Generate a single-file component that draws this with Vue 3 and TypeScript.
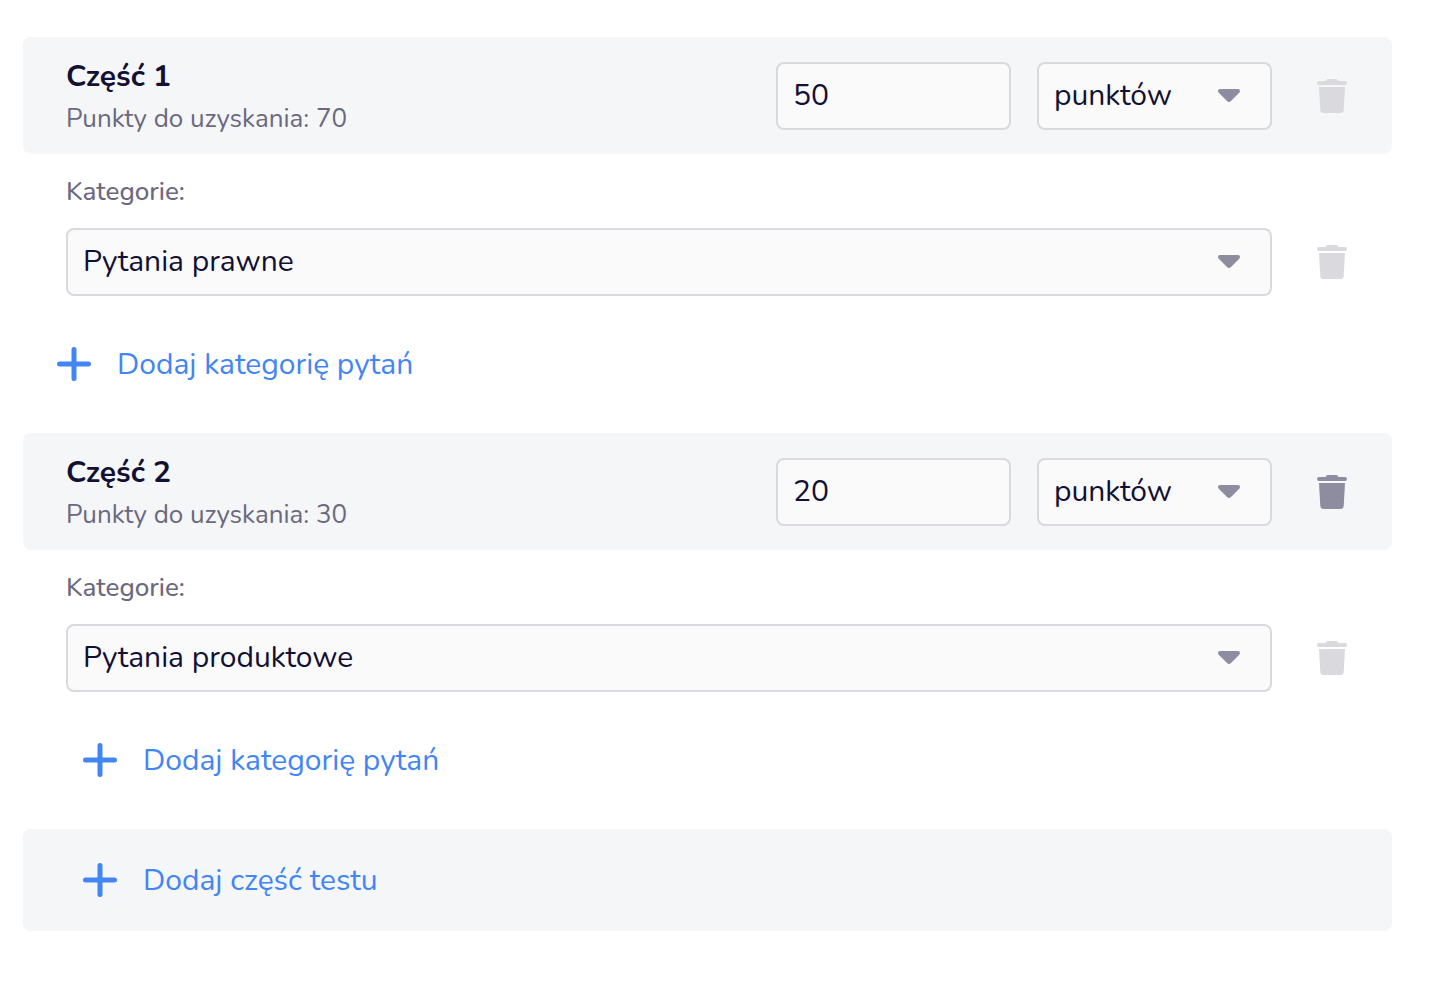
<script setup lang="ts">
import { ref } from 'vue'

interface Part {
  id: number
  title: string
  available: number
  threshold: string
  unit: string
  category: string
  removable: boolean
  indented: boolean
}

const units: string[] = ['punktów', 'procent']
const categories: string[] = ['Pytania prawne', 'Pytania produktowe']

const parts = ref<Part[]>([
  { id: 1, title: 'Część 1', available: 70, threshold: '50', unit: 'punktów', category: 'Pytania prawne', removable: false, indented: false },
  { id: 2, title: 'Część 2', available: 30, threshold: '20', unit: 'punktów', category: 'Pytania produktowe', removable: true, indented: true },
])
</script>

<template>
  <main class="page">
    <section v-for="part in parts" :key="part.id" class="part">
      <header class="bar part-header">
        <div class="heading">
          <h2 class="title">{{ part.title }}</h2>
          <p class="subtitle">Punkty do uzyskania: {{ part.available }}</p>
        </div>
        <input v-model="part.threshold" class="field short" type="text" inputmode="numeric" :aria-label="`Próg: ${part.title}`" />
        <div class="select-wrap short">
          <select v-model="part.unit" class="field" :aria-label="`Jednostka: ${part.title}`">
            <option v-for="unit in units" :key="unit">{{ unit }}</option>
          </select>
          <svg class="caret" viewBox="0 0 22 13" aria-hidden="true">
            <path d="M2 0H20Q22 0 22 2Q22 3 21 4L13 12Q11 14 9 12L1 4Q0 3 0 2Q0 0 2 0Z" />
          </svg>
        </div>
        <button class="trash" :class="{ active: part.removable }" type="button" :aria-label="`Usuń: ${part.title}`">
          <svg viewBox="0 0 30 34" aria-hidden="true">
            <path d="M2 2H8.500Q9.500 0 11 0H19Q20.500 0 21.500 2H28A2 2 0 0 1 28 6H2A2 2 0 0 1 2 2Z" />
            <path d="M2 8H28L26.700 31Q26.500 34 23.500 34H6.500Q3.500 34 3.300 31Z" />
          </svg>
        </button>
      </header>

      <div class="part-body">
        <label class="category-label" :for="`category-${part.id}`">Kategorie:</label>
        <div class="category-row">
          <div class="select-wrap">
            <select :id="`category-${part.id}`" v-model="part.category" class="field">
              <option v-for="category in categories" :key="category">{{ category }}</option>
            </select>
            <svg class="caret" viewBox="0 0 22 13" aria-hidden="true">
              <path d="M2 0H20Q22 0 22 2Q22 3 21 4L13 12Q11 14 9 12L1 4Q0 3 0 2Q0 0 2 0Z" />
            </svg>
          </div>
          <button class="trash" type="button" aria-label="Usuń kategorię">
            <svg viewBox="0 0 30 34" aria-hidden="true">
              <path d="M2 2H8.500Q9.500 0 11 0H19Q20.500 0 21.500 2H28A2 2 0 0 1 28 6H2A2 2 0 0 1 2 2Z" />
              <path d="M2 8H28L26.700 31Q26.500 34 23.500 34H6.500Q3.500 34 3.300 31Z" />
            </svg>
          </button>
        </div>
      </div>

      <div class="add-row" :class="{ indented: part.indented }">
        <button class="add" type="button">
          <svg viewBox="0 0 34 34" aria-hidden="true"><path d="M17 2.500V31.500M2.500 17H31.500" /></svg>
          <span>Dodaj kategorię pytań</span>
        </button>
      </div>
    </section>

    <div class="bar footer-bar">
      <button class="add" type="button">
        <svg viewBox="0 0 34 34" aria-hidden="true"><path d="M17 2.500V31.500M2.500 17H31.500" /></svg>
        <span>Dodaj część testu</span>
      </button>
    </div>
  </main>
</template>

<style>
body {
  margin: 0;
  background: #ffffff;
}
</style>

<style scoped>
.page {
  box-sizing: border-box;
  padding: 37px 54px 54px 23px;
  color: #121033;
  font-family: Nunito, Lato, sans-serif;
  font-size: 30px;
  line-height: 42px;
}

.bar {
  border-radius: 8px;
  background: #f5f6f8;
}

.part-header {
  display: flex;
  align-items: center;
  min-height: 117px;
  padding-left: 43px;
}

.heading {
  flex: 1;
  min-width: 0;
  padding-top: 4px;
}

.title,
.subtitle {
  margin: 0;
}

.title {
  font-size: 30px;
  font-weight: 700;
}

.subtitle {
  color: #6b6980;
  font-size: 26px;
}

.field {
  box-sizing: border-box;
  display: block;
  width: 100%;
  height: 68px;
  margin: 0;
  padding: 0 15px;
  border: 2px solid #d9d9de;
  border-radius: 8px;
  background: #fafafa;
  color: inherit;
  font: inherit;
  appearance: none;
}

.short {
  flex: none;
  width: 235px;
}

.select-wrap {
  position: relative;
}

.part-header .select-wrap {
  margin-left: 26px;
}

.caret {
  position: absolute;
  top: 27px;
  right: 32px;
  width: 22px;
  height: 13px;
  fill: #8e8c9f;
  pointer-events: none;
}

.trash {
  display: flex;
  flex: none;
  align-items: center;
  justify-content: center;
  width: 120px;
  height: 68px;
  padding: 0;
  border: 0;
  background: none;
  color: #d9d9de;
  cursor: pointer;
}

.trash.active {
  color: #8e8c9f;
}

.trash svg {
  width: 30px;
  height: 34px;
  fill: currentColor;
}

.part-body {
  padding: 20px 0 34px 43px;
}

.category-label {
  display: block;
  width: fit-content;
  margin-bottom: 18px;
  color: #6b6980;
  font-size: 26px;
  font-weight: 500;
  line-height: 36px;
}

.category-row {
  display: flex;
}

.category-row .select-wrap {
  flex: 1;
}

.add-row {
  padding: 0 34px 35px;
}

.add-row.indented {
  padding-left: 60px;
}

.add {
  display: flex;
  align-items: center;
  gap: 26px;
  height: 68px;
  padding: 0;
  border: 0;
  background: none;
  color: #4285f4;
  font: inherit;
  cursor: pointer;
}

.add span {
  padding-top: 2px;
}

.add svg {
  width: 34px;
  height: 34px;
  fill: none;
  stroke: currentColor;
  stroke-width: 5;
  stroke-linecap: round;
}

.footer-bar {
  padding: 17px 60px;
}
</style>
